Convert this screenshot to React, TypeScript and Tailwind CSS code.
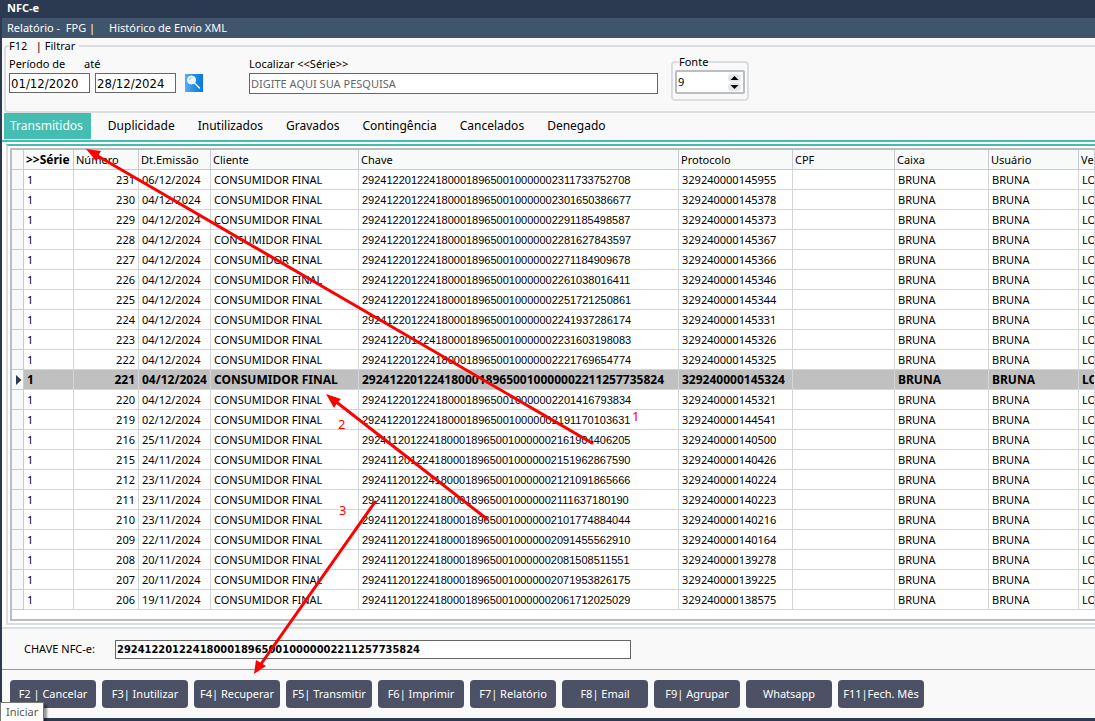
import { useState } from 'react';

type Note = { serie: string; numero: string; emissao: string; chave: string; protocolo: string };

const notes: Note[] = [
  { serie: '1', numero: '231', emissao: '06/12/2024', chave: '29241220122418000189650010000002311733752708', protocolo: '329240000145955' },
  { serie: '1', numero: '230', emissao: '04/12/2024', chave: '29241220122418000189650010000002301650386677', protocolo: '329240000145378' },
  { serie: '1', numero: '229', emissao: '04/12/2024', chave: '29241220122418000189650010000002291185498587', protocolo: '329240000145373' },
  { serie: '1', numero: '228', emissao: '04/12/2024', chave: '29241220122418000189650010000002281627843597', protocolo: '329240000145367' },
  { serie: '1', numero: '227', emissao: '04/12/2024', chave: '29241220122418000189650010000002271184909678', protocolo: '329240000145366' },
  { serie: '1', numero: '226', emissao: '04/12/2024', chave: '29241220122418000189650010000002261038016411', protocolo: '329240000145346' },
  { serie: '1', numero: '225', emissao: '04/12/2024', chave: '29241220122418000189650010000002251721250861', protocolo: '329240000145344' },
  { serie: '1', numero: '224', emissao: '04/12/2024', chave: '29241220122418000189650010000002241937286174', protocolo: '329240000145331' },
  { serie: '1', numero: '223', emissao: '04/12/2024', chave: '29241220122418000189650010000002231603198083', protocolo: '329240000145326' },
  { serie: '1', numero: '222', emissao: '04/12/2024', chave: '29241220122418000189650010000002221769654774', protocolo: '329240000145325' },
  { serie: '1', numero: '221', emissao: '04/12/2024', chave: '29241220122418000189650010000002211257735824', protocolo: '329240000145324' },
  { serie: '1', numero: '220', emissao: '04/12/2024', chave: '29241220122418000189650010000002201416793834', protocolo: '329240000145321' },
  { serie: '1', numero: '219', emissao: '02/12/2024', chave: '29241220122418000189650010000002191170103631', protocolo: '329240000144541' },
  { serie: '1', numero: '216', emissao: '25/11/2024', chave: '29241120122418000189650010000002161904406205', protocolo: '329240000140500' },
  { serie: '1', numero: '215', emissao: '24/11/2024', chave: '29241120122418000189650010000002151962867590', protocolo: '329240000140426' },
  { serie: '1', numero: '212', emissao: '23/11/2024', chave: '29241120122418000189650010000002121091865666', protocolo: '329240000140224' },
  { serie: '1', numero: '211', emissao: '23/11/2024', chave: '29241120122418000189650010000002111637180190', protocolo: '329240000140223' },
  { serie: '1', numero: '210', emissao: '23/11/2024', chave: '29241120122418000189650010000002101774884044', protocolo: '329240000140216' },
  { serie: '1', numero: '209', emissao: '22/11/2024', chave: '29241120122418000189650010000002091455562910', protocolo: '329240000140164' },
  { serie: '1', numero: '208', emissao: '20/11/2024', chave: '29241120122418000189650010000002081508511551', protocolo: '329240000139278' },
  { serie: '1', numero: '207', emissao: '20/11/2024', chave: '29241120122418000189650010000002071953826175', protocolo: '329240000139225' },
  { serie: '1', numero: '206', emissao: '19/11/2024', chave: '29241120122418000189650010000002061712025029', protocolo: '329240000138575' },
];

const columns = [
  { label: '', width: 'w-[12px]' },
  { label: '>>Série', width: 'w-[50px]' },
  { label: 'Número', width: 'w-[65px]' },
  { label: 'Dt.Emissão', width: 'w-[72px]' },
  { label: 'Cliente', width: 'w-[148px]' },
  { label: 'Chave', width: 'w-[320px]' },
  { label: 'Protocolo', width: 'w-[114px]' },
  { label: 'CPF', width: 'w-[102px]' },
  { label: 'Caixa', width: 'w-[94px]' },
  { label: 'Usuário', width: 'w-[90px]' },
  { label: 'Ve', width: '' },
];

const tabs = ['Transmitidos', 'Duplicidade', 'Inutilizados', 'Gravados', 'Contingência', 'Cancelados', 'Denegado'];

const actions = [
  'F2 | Cancelar',
  'F3| Inutilizar',
  'F4| Recuperar',
  'F5| Transmitir',
  'F6| Imprimir',
  'F7| Relatório',
  'F8| Email',
  'F9| Agrupar',
  'Whatsapp',
  'F11|Fech. Mês',
];

const cell = 'h-5 overflow-hidden whitespace-nowrap border-r border-b border-[#d3d6d9] p-0 pl-[3px]';

function SearchIcon() {
  return (
    <svg width="18" height="18" viewBox="0 0 18 18" aria-hidden="true">
      <defs>
        <linearGradient id="searchBg" x1="0" y1="0" x2="1" y2="0">
          <stop offset="0" stopColor="#5aaef0" />
          <stop offset="0.5" stopColor="#2490e6" />
          <stop offset="1" stopColor="#0a78d4" />
        </linearGradient>
      </defs>
      <rect width="18" height="18" fill="url(#searchBg)" />
      <circle cx="6.5" cy="6" r="4" fill="#e6f3fd" stroke="#fff" />
      <path d="M4.5 6a2 2 0 0 1 2-2" fill="none" stroke="#8cc4f2" />
      <path d="M9.5 9L15 14.5" stroke="#fff" strokeWidth="1.2" />
    </svg>
  );
}

function Arrows() {
  return (
    <svg className="pointer-events-none absolute top-0 left-0" width="1095" height="721" aria-hidden="true">
      <g stroke="#f00" strokeWidth="3" strokeLinecap="round">
        <path d="M592 443L96 155" />
        <path d="M487 519L335 401" />
        <path d="M375 502L261 664" />
      </g>
      <g fill="#f00">
        <path d="M86 149L101 151L98 156L96 161Z" />
        <path d="M326 394L341 399L337 403L334 408Z" />
        <path d="M254 674L256 660L261 663L266 666Z" />
      </g>
    </svg>
  );
}

export default function App() {
  const [activeTab, setActiveTab] = useState('Transmitidos');
  const [selected, setSelected] = useState('221');
  const [fontSize, setFontSize] = useState(9);
  const [from, setFrom] = useState('01/12/2020');
  const [to, setTo] = useState('28/12/2024');
  const [search, setSearch] = useState('');

  const current = notes.find((n) => n.numero === selected);

  return (
    <div className="relative min-h-screen overflow-hidden bg-[#2b3a50] pb-[3px] font-['Noto_Sans',sans-serif] text-[12px] leading-4 text-black">
      {/* Title bar and menu */}
      <header>
        <h1 className="h-[18px] pl-[7px] text-[11px] font-bold text-white">NFC-e</h1>
        <nav className="ml-0.5 flex h-5 items-center bg-[#40546c] pl-[5px] text-white">
          <a href="#fpg" className="w-[102px] whitespace-pre text-[11px]">Relatório -  FPG |</a>
          <a href="#historico" className="text-[11px]">Histórico de Envio XML</a>
        </nav>
      </header>

      <main className="ml-0.5 bg-[#f9f9f9]">
        {/* Filters */}
        <fieldset className="ml-0.5 h-[75px] rounded-l border-2 border-r-0 border-[#dadee1] pl-[3px] text-[11px]">
          <legend className="h-4 whitespace-pre pr-1">F12   | Filtrar</legend>
          <div className="flex items-start">
            <div className="pt-0.5">
              <div className="flex h-[17px]">
                <label htmlFor="from" className="w-[75px]">Período de</label>
                <label htmlFor="to">até</label>
              </div>
              <div className="flex gap-[5px] font-['DejaVu_Sans_Condensed',sans-serif] text-[13px]">
                <input id="from" value={from} onChange={(e) => setFrom(e.target.value)} className="h-5 w-[81px] border border-[#666] bg-white px-px" />
                <input id="to" value={to} onChange={(e) => setTo(e.target.value)} className="h-5 w-[81px] border border-[#666] bg-white px-px" />
              </div>
            </div>
            <button type="button" aria-label="Pesquisar" className="mt-5 ml-[9px]">
              <SearchIcon />
            </button>
            <div className="ml-[46px] flex w-[409px] flex-col pt-0.5">
              <label htmlFor="search" className="h-[17px]">{'Localizar <<Série>>'}</label>
              <input
                id="search"
                value={search}
                onChange={(e) => setSearch(e.target.value)}
                placeholder="DIGITE AQUI SUA PESQUISA"
                className="h-[21px] border border-[#666] bg-white px-px placeholder:text-[#666]"
              />
            </div>
            <fieldset className="ml-[13px] h-[47px] w-[78px] rounded border-2 border-[#dadee1] px-0.5">
              <legend className="ml-1 h-4">
                <label htmlFor="fontSize">Fonte</label>
              </legend>
              <div className="flex h-6 items-center justify-between rounded-xs border-2 border-[#b8bec2] bg-white pr-0.5">
                <input
                  id="fontSize"
                  value={fontSize}
                  onChange={(e) => setFontSize(Number(e.target.value) || 0)}
                  className="w-10 pl-px"
                />
                <div className="flex flex-col gap-px">
                  <button type="button" aria-label="Aumentar" onClick={() => setFontSize(fontSize + 1)} className="rounded-full bg-[#e4e6e8]">
                    <svg width="13" height="8" viewBox="0 0 13 8"><path d="M2.5 6L6.5 2L10.5 6Z" /></svg>
                  </button>
                  <button type="button" aria-label="Diminuir" onClick={() => setFontSize(fontSize - 1)} className="rounded-full bg-[#e4e6e8]">
                    <svg width="13" height="8" viewBox="0 0 13 8"><path d="M2.5 2L6.5 6L10.5 2Z" /></svg>
                  </button>
                </div>
              </div>
            </fieldset>
          </div>
        </fieldset>

        {/* Tabs */}
        <div role="tablist" className="flex h-[27px] gap-[11px] pl-0.5">
          {tabs.map((tab) => (
            <button
              key={tab}
              type="button"
              role="tab"
              aria-selected={tab === activeTab}
              onClick={() => setActiveTab(tab)}
              className={tab === activeTab ? 'h-[26px] bg-[#45bdb0] pr-2 pl-1.5 text-white' : 'h-[26px] px-1.5'}
            >
              {tab}
            </button>
          ))}
        </div>

        {/* Notes grid */}
        <section className="border-t-2 border-b-2 border-t-[#45bdb0] border-b-[#dadee1] bg-white py-0.5 pl-1">
          <div className="border-2 border-r-0 border-[#dadee1] border-t-[#45bdb0] py-0.5 pl-0.5">
            <div className="overflow-hidden border-2 border-r-0 border-[#b8bec2] pb-[9px]">
              <table className="w-full table-fixed border-separate border-spacing-0 text-[11px]">
                <thead>
                  <tr className="bg-[#f8f9f9] text-left">
                    {columns.map((col, i) => (
                      <th
                        key={i}
                        className={`h-5 overflow-hidden whitespace-nowrap border-r border-b border-[#c8ccd0] p-0 pl-0.5 ${col.width} ${i === 1 ? 'text-[12px] font-bold' : 'font-normal'}`}
                      >
                        {col.label}
                      </th>
                    ))}
                  </tr>
                </thead>
                <tbody>
                  {notes.map((note) => (
                    <tr
                      key={note.numero}
                      onClick={() => setSelected(note.numero)}
                      className={note.numero === selected ? 'bg-[#c0c0c0] text-[12px] font-bold' : 'bg-white'}
                    >
                      <td className="h-5 border-r border-b border-[#c8ccd0] bg-[#f8f9f9] p-0 pl-1">
                        {note.numero === selected && (
                          <svg width="6" height="10" viewBox="0 0 6 10" className="block"><path d="M0 0L5.5 5L0 10Z" fill="#2b3a50" /></svg>
                        )}
                      </td>
                      <td className={cell}>{note.serie}</td>
                      <td className={`${cell} pr-[3px] text-right`}>{note.numero}</td>
                      <td className={cell}>{note.emissao}</td>
                      <td className={cell}>CONSUMIDOR FINAL</td>
                      <td className={note.numero === selected ? cell : `${cell} font-['Liberation_Sans',sans-serif]`}>{note.chave}</td>
                      <td className={cell}>{note.protocolo}</td>
                      <td className={cell}></td>
                      <td className={cell}>BRUNA</td>
                      <td className={cell}>BRUNA</td>
                      <td className={cell}>LO</td>
                    </tr>
                  ))}
                </tbody>
              </table>
            </div>
          </div>
        </section>

        <div className="flex h-[41px] items-center border-b border-[#999] pl-[22px]">
          <label htmlFor="chave" className="w-[91px] text-[11px]">CHAVE NFC-e:</label>
          <input
            id="chave"
            readOnly
            value={current ? current.chave : ''}
            className="h-[19px] w-[516px] border border-[#666] bg-white px-px font-['DejaVu_Sans_Condensed',sans-serif] text-[11px] font-bold"
          />
        </div>

        {/* Actions */}
        <footer className="flex gap-1.5 pt-[10px] pb-[10px] pl-2">
          {actions.map((action) => (
            <button key={action} type="button" className="h-7 w-[86px] whitespace-nowrap rounded bg-[#4c5166] text-[11px] text-white">
              {action}
            </button>
          ))}
        </footer>
      </main>

      <Arrows />
      <span className="absolute top-[408px] left-[632px] text-[13px] text-[#f00]">1</span>
      <span className="absolute top-[416px] left-[338px] text-[13px] text-[#f00]">2</span>
      <span className="absolute top-[502px] left-[339px] text-[13px] text-[#f00]">3</span>

      <div role="tooltip" className="absolute bottom-0 left-0 h-[19px] border border-b-0 border-[#777] bg-white px-[5px] text-[11px] leading-[18px] text-[#555] shadow-[3px_3px_2px_rgba(0,0,0,0.4)]">
        Iniciar
      </div>
    </div>
  );
}
